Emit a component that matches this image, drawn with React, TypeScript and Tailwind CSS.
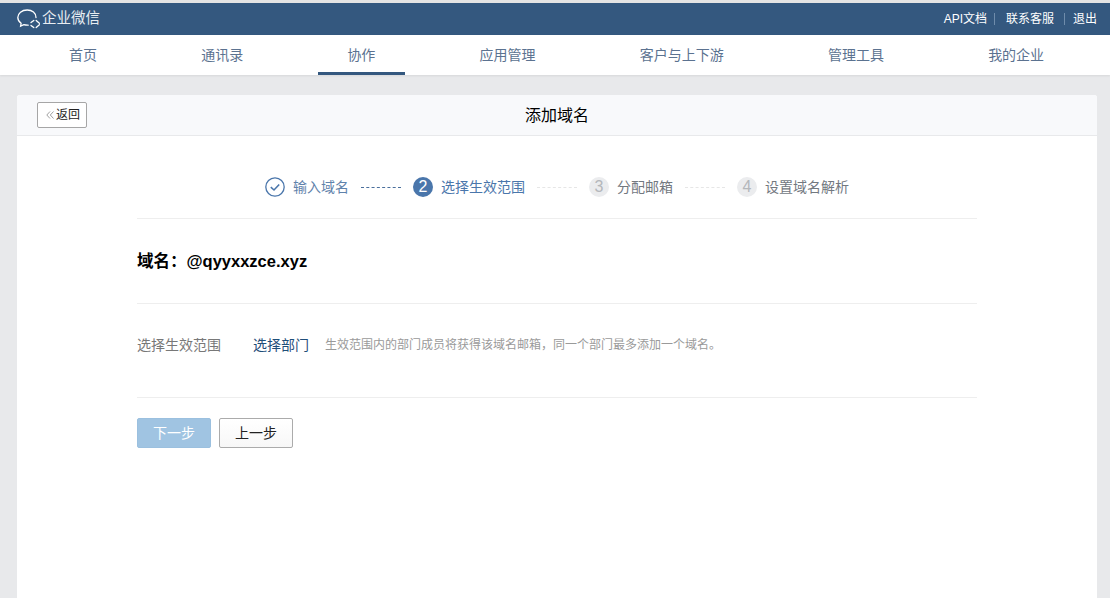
const font = '[font-family:"Liberation_Sans","Noto_Sans_CJK_SC",sans-serif]';

const navItems = ["首页", "通讯录", "协作", "应用管理", "客户与上下游", "管理工具", "我的企业"];

function Logo() {
  return (
    <svg width="24" height="22" viewBox="0 0 24 22" fill="none" stroke="white" strokeWidth="1.3" strokeLinecap="round">
      <path d="M19 9.5C19 5 15.2 2 10.2 2C4.8 2 .8 5.2 .8 9.6C.8 12 2.1 14 4.1 15.3L3.6 18.2L6.8 16.7C8.2 17.1 9.4 17.3 11.2 17.2" />
      <path d="M14 14.6L16.8 12.4M19.2 12.4L22.4 15.2M22.4 16.8L19.2 19.6M16.8 19.6L14 17.4" />
    </svg>
  );
}

function Step({ n, label, active }: { n: string; label: string; active?: boolean }) {
  return (
    <div className="flex items-center gap-2">
      <span
        className={`flex size-5 items-center justify-center rounded-full text-base ${
          active ? "bg-[#4a76ab] text-white" : "bg-[#ebecee] text-[#b4b7bb]"
        }`}
      >
        {n}
      </span>
      <span className={`text-sm ${active ? "text-[#4a76ab]" : "text-[#72787f]"}`}>{label}</span>
    </div>
  );
}

export default function App() {
  return (
    <div className={`flex h-[598px] flex-col overflow-hidden bg-[#e8e9eb] ${font}`}>
      <div className="h-[3px] bg-[#e4e4e4]" />
      <div className="flex h-[32px] items-center justify-between bg-[#34587f] pl-[17px] pr-[13px] text-white">
        <div className="flex items-center gap-[1px]">
          <Logo />
          <span className="text-[14.5px] text-[#e8edf2]">企业微信</span>
        </div>
        <div className="flex items-center text-xs">
          <span>API文档</span>
          <span className="ml-[7px] h-3 w-px bg-[#6f8cab]" />
          <span className="ml-[11px]">联系客服</span>
          <span className="ml-[10px] h-3 w-px bg-[#6f8cab]" />
          <span className="ml-[8px]">退出</span>
        </div>
      </div>
      <div className="flex h-[40px] items-stretch gap-[45.2px] bg-white pl-[39.5px] shadow-[0_1px_2px_rgba(0,0,0,0.08)]">
        {navItems.map((item) => (
          <div
            key={item}
            className={`flex items-center border-b-[3px] px-[29.5px] pt-[3px] text-sm text-[#5b7290] ${
              item === "协作" ? "border-[#34587f]" : "border-transparent"
            }`}
          >
            {item}
          </div>
        ))}
      </div>
      <div className="mx-[17px] mr-[13px] mt-[20px] flex-1 rounded-t-[3px] bg-white">
        <div className="relative flex h-[41px] items-center justify-center rounded-t-[3px] border-b border-[#e8e9eb] bg-[#f8f9fb]">
          <button className="absolute left-[20px] top-[7px] flex h-[26px] w-[50px] items-center justify-center gap-[2px] rounded-[2px] border border-[#a6a6a6] bg-white pl-[2px] text-xs text-[#222]">
            <svg width="8" height="8" viewBox="0 0 8 8" fill="none" stroke="#888" strokeWidth="0.8">
              <path d="M4 .5L.8 4L4 7.5M7.5 .5L4.3 4L7.5 7.5" />
            </svg>
            返回
          </button>
          <span className="pt-[2px] text-base text-black">添加域名</span>
        </div>
        <div className="px-[120px]">
          <div className="flex h-[83px] items-center justify-center border-b border-[#eeeeee] pt-[20px]">
            <div className="flex items-center gap-2">
              <svg width="20" height="20" viewBox="0 0 20 20" fill="none" stroke="#4a76ab">
                <circle cx="10" cy="10" r="9.2" strokeWidth="1.3" />
                <path d="M5.8 10.2L9 13L14.2 7.5" strokeWidth="1.6" />
              </svg>
              <span className="text-sm text-[#5f82ab]">输入域名</span>
            </div>
            <span className="mx-3 w-10 border-t border-dashed border-[#4a6f9c]" />
            <Step n="2" label="选择生效范围" active />
            <span className="mx-3 w-10 border-t border-dashed border-[#e6e6e6]" />
            <Step n="3" label="分配邮箱" />
            <span className="mx-3 w-10 border-t border-dashed border-[#e6e6e6]" />
            <Step n="4" label="设置域名解析" />
          </div>
          <div className="flex h-[85px] items-center border-b border-[#eeeeee] pt-[1px] text-[16.5px] font-bold text-black">
            域名：@qyyxxzce.xyz
          </div>
          <div className="flex h-[94px] items-start border-b border-[#eeeeee] pt-[31px]">
            <span className="w-[116px] text-sm leading-5 text-[#787878]">选择生效范围</span>
            <span className="w-[72px] text-sm leading-5 text-[#1f4e79]">选择部门</span>
            <span className="text-xs leading-5 text-[#9a9a9a]">
              生效范围内的部门成员将获得该域名邮箱，同一个部门最多添加一个域名。
            </span>
          </div>
          <div className="mt-[20px] flex gap-2">
            <button className="h-[30px] w-[74px] rounded-[2px] border border-[#9bc0df] bg-[#a0c4e2] text-sm text-white">
              下一步
            </button>
            <button className="h-[30px] w-[74px] rounded-[2px] border border-[#ababab] bg-gradient-to-b from-white to-[#f7f7f7] text-sm text-[#222]">
              上一步
            </button>
          </div>
        </div>
      </div>
    </div>
  );
}
